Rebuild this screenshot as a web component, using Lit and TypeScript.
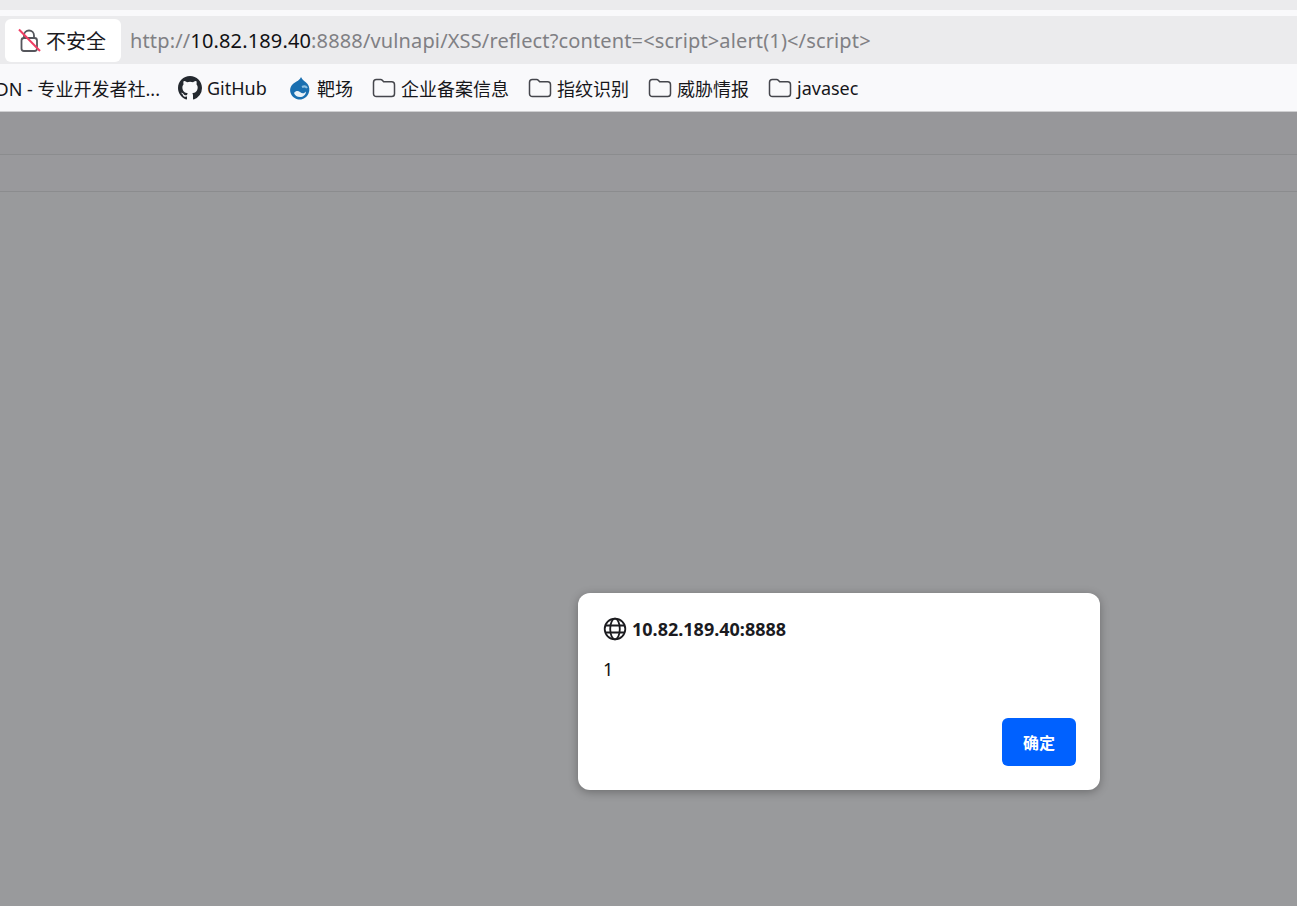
import {html, css, LitElement} from "lit";
import {customElement} from "lit/decorators.js";

const folderIcon = html`<svg class="icon" width="24" height="24" viewBox="0 0 24 24" fill="none">
  <path d="M1.5 6.5c0-1.7 1.2-3 2.9-3h4.2c.8 0 1.4.3 1.9.9l1.2 1.4h8c1.700 0 2.800 1.200 2.800 2.900v9c0 1.700-1.100 2.800-2.800 2.800H4.400c-1.700 0-2.900-1.100-2.900-2.800z" stroke="#45464c" stroke-width="1.500"/>
</svg>`;

const folders = ["企业备案信息", "指纹识别", "威胁情报", "javasec"];

@customElement("app-root")
export class AppRoot extends LitElement {
  static styles = css`
    :host {
      display: block;
      position: relative;
      width: 1297px;
      height: 906px;
      overflow: hidden;
      font-family: "Noto Sans", "Noto Sans CJK SC", sans-serif;
      background: #999a9c;
    }
    .tabstrip { height: 10px; background: #ebebed; }
    .gap { height: 6px; background: #f9f9fb; }
    .urlbar {
      height: 48px;
      box-sizing: border-box;
      background: #ebebed;
      display: flex;
      align-items: center;
      padding: 0 0 0 5px;
      gap: 9px;
    }
    .security {
      width: 116px;
      height: 43px;
      box-sizing: border-box;
      background: #fff;
      border-radius: 6px;
      display: flex;
      align-items: center;
      padding-left: 12px;
      gap: 5px;
      font-size: 20px;
      color: #1b1b1f;
    }
    .url {
      font-size: 20px;
      color: #808084;
      white-space: nowrap;
      letter-spacing: 0.14px;
    }
    .url b { font-weight: 400; color: #111114; }
    .bookmarks {
      height: 48px;
      box-sizing: border-box;
      background: #f9f9fb;
      border-bottom: 1px solid #cfcfd1;
      display: flex;
      align-items: center;
      margin-left: 0;
      padding-left: 0;
      overflow: hidden;
      font-size: 18px;
      color: #16161a;
      white-space: nowrap;
    }
    .bookmark { display: flex; align-items: center; gap: 5px; flex: none; }
    .icon { flex: none; display: block; }
    .first { width: 178px; justify-content: flex-end; padding-right: 18px; box-sizing: border-box; overflow: hidden; }
    .first span { flex: none; }
    .gh { width: 96px; gap: 5px; }
    .drupal { width: 84px; gap: 5px; margin-left: 14px; }
    .folder { margin-right: 19px; gap: 5px; }
    .toolbar { height: 43px; border-bottom: 1px solid #8b8c8e; box-sizing: border-box; background: #97979a; }
    .subbar { height: 37px; border-bottom: 1px solid #8b8c8e; box-sizing: border-box; background: #99999c; }
    .dialog {
      position: absolute;
      left: 578px;
      top: 593px;
      width: 522px;
      height: 197px;
      box-sizing: border-box;
      background: #fff;
      border-radius: 12px;
      box-shadow: 0 2px 10px rgba(0, 0, 0, 0.3);
      padding: 24px 24px 24px 25px;
      display: flex;
      flex-direction: column;
    }
    .origin {
      display: flex;
      align-items: center;
      gap: 5px;
      font-size: 18px;
      font-weight: 700;
      color: #1b1b1f;
      height: 24px;
    }
    .message {
      margin-top: 16px;
      font-size: 18px;
      line-height: 24px;
      color: #111;
    }
    .actions { margin-top: auto; display: flex; justify-content: flex-end; }
    .ok {
      width: 74px;
      height: 48px;
      border: none;
      border-radius: 6px;
      background: #0061ff;
      color: #fff;
      font: 700 16px "Noto Sans CJK SC", "Noto Sans", sans-serif;
      padding: 0;
    }
  `;

  render() {
    return html`
      <div class="tabstrip"></div>
      <div class="gap"></div>
      <div class="urlbar">
        <div class="security">
          <svg class="icon" width="24" height="24" viewBox="0 0 24 24" fill="none">
            <path d="M7 10V7.500a5 5 0 0 1 10 0V10" stroke="#55565c" stroke-width="1.800"/>
            <rect x="4.500" y="10" width="15.500" height="13" rx="2.500" stroke="#55565c" stroke-width="1.800"/>
            <path d="M2 1.500 23 23" stroke="#f03e64" stroke-width="2"/>
          </svg>
          <span>不安全</span>
        </div>
        <div class="url">http://<b>10.82.189.40</b>:8888/vulnapi/XSS/reflect?content=&lt;script&gt;alert(1)&lt;/script&gt;</div>
      </div>
      <div class="bookmarks">
        <div class="bookmark first"><span>CSDN - 专业开发者社...</span></div>
        <div class="bookmark gh">
          <svg class="icon" width="24" height="24" viewBox="0 0 16 16" fill="#24292f">
            <path d="M8 0C3.580 0 0 3.580 0 8c0 3.540 2.290 6.530 5.470 7.590.4.070.55-.17.55-.38 0-.19-.01-.82-.01-1.490-2.010.37-2.530-.49-2.690-.94-.09-.23-.48-.94-.82-1.130-.28-.15-.68-.52-.01-.53.63-.01 1.080.58 1.230.82.720 1.210 1.870.87 2.330.66.070-.52.280-.87.510-1.070-1.780-.2-3.640-.89-3.640-3.950 0-.87.310-1.590.820-2.150-.08-.2-.36-1.020.08-2.120 0 0 .67-.21 2.200.82a7.400 7.400 0 0 1 4 0c1.530-1.040 2.200-.82 2.200-.82.440 1.100.16 1.920.08 2.120.51.560.82 1.270.82 2.150 0 3.070-1.870 3.750-3.650 3.950.29.250.54.730.54 1.480 0 1.070-.01 1.930-.01 2.200 0 .21.150.46.550.38A8.010 8.010 0 0 0 16 8c0-4.420-3.580-8-8-8z"/>
          </svg>
          <span>GitHub</span>
        </div>
        <div class="bookmark drupal">
          <svg class="icon" width="24" height="24" viewBox="0 0 24 24">
            <path d="M13 1c1 3 4.500 4.500 6.500 7 2 2.500 2.500 6 1 9.500C19 21 15.500 23.500 12 23.500S4.500 21.500 2.800 17.500C1.300 13.500 2.500 10 5.500 7.500 8.500 5.500 12 4 13 1z" fill="#1a6fb0"/>
            <path d="M6 17c2-2.500 4-2.500 6-1s4 2 6-.5c0 3.500-3 5.500-6 5.500s-5-1.500-6-4z" fill="#e8f1f7"/>
            <path d="M14 11c2-1 4-.5 5 1" stroke="#8dc0e2" stroke-width="2" fill="none"/>
          </svg>
          <span>靶场</span>
        </div>
        ${folders.map((name) => html`
          <div class="bookmark folder">${folderIcon}<span>${name}</span></div>
        `)}
      </div>
      <div class="toolbar"></div>
      <div class="subbar"></div>
      <div class="dialog">
        <div class="origin">
          <svg class="icon" width="24" height="24" viewBox="0 0 24 24" fill="none" stroke="#1b1b1f" stroke-width="1.800">
            <circle cx="12" cy="12" r="10.300"/>
            <ellipse cx="12" cy="12" rx="4.800" ry="10.300"/>
            <path d="M2 8.500h20M2 15.500h20"/>
          </svg>
          <span>10.82.189.40:8888</span>
        </div>
        <div class="message">1</div>
        <div class="actions"><button class="ok">确定</button></div>
      </div>
    `;
  }
}
